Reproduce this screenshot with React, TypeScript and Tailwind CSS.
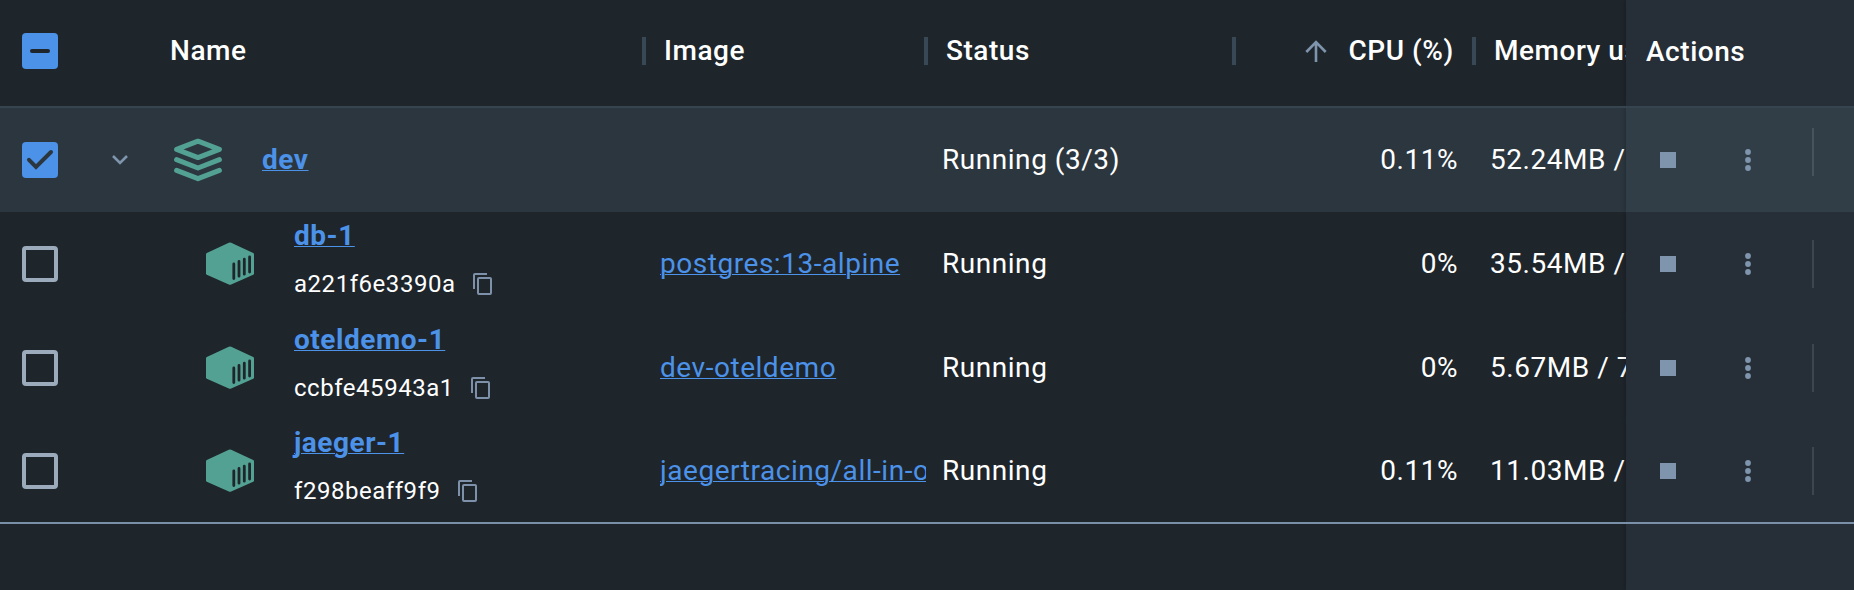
import React from 'react';

type Container = {
  name: string;
  id: string;
  image: string;
  cpu: string;
  memory: string;
  height: string;
};

const containers: Container[] = [
  { name: 'db-1', id: 'a221f6e3390a', image: 'postgres:13-alpine', cpu: '0%', memory: '35.54MB / 7.66GB', height: 'h-[104px]' },
  { name: 'oteldemo-1', id: 'ccbfe45943a1', image: 'dev-oteldemo', cpu: '0%', memory: '5.67MB / 7.66GB', height: 'h-[104px]' },
  { name: 'jaeger-1', id: 'f298beaff9f9', image: 'jaegertracing/all-in-one', cpu: '0.11%', memory: '11.03MB / 7.66GB', height: 'h-[102px]' },
];

const columns =
  'grid flex-none w-[1626px] grid-cols-[80px_80px_500px_266px_308px_240px_152px] items-center overflow-hidden whitespace-nowrap';

const sideShadow = 'shadow-[-1px_0_5px_rgba(0,0,0,0.2)] [clip-path:inset(0_0_0_-10px)]';

const link = 'text-[#4c92e9] underline decoration-1 underline-offset-[1px]';

function Divider() {
  return <span className="h-7 w-1 flex-none bg-[#394855]" />;
}

function CheckBox({ state }: { state: 'on' | 'mixed' | 'off' }) {
  if (state === 'off') {
    return <span className="ml-[22px] size-9 rounded-[4px] border-4 border-[#9cabbc]" />;
  }
  return (
    <svg className="ml-[22px] size-9" viewBox="0 0 36 36" fill="none">
      <rect width="36" height="36" rx="4" fill="#4c92e9" />
      {state === 'mixed' ? (
        <path d="M10 18H26" stroke="#1e252b" strokeWidth="4" strokeLinecap="round" />
      ) : (
        <path d="M7 17.8L14 25L29 10" stroke="#2b363f" strokeWidth="4" strokeLinecap="round" />
      )}
    </svg>
  );
}

function StackIcon() {
  return (
    <svg className="h-[44px] w-12 flex-none" viewBox="0 0 48 44" fill="none" stroke="#53a192" strokeWidth="5" strokeLinejoin="round" strokeLinecap="round">
      <path d="M2.6 11.4L24 3.2L45.4 11.4L24 19.6Z" />
      <path d="M2.6 21.7L24 30L45.4 21.7" />
      <path d="M2.6 32.4L24 40.7L45.4 32.4" />
    </svg>
  );
}

function ContainerIcon() {
  return (
    <svg className="h-[44px] w-12 flex-none" viewBox="0 0 48 44" fill="none">
      <path d="M22.8 0.8Q24 0.3 25.2 0.8L47.2 10.9Q48 11.3 48 12.2V31.4Q48 32.4 47.2 32.8L25.2 42.6Q24 43.1 22.8 42.6L0.8 32.8Q0 32.4 0 31.4V12.2Q0 11.3 0.8 10.9Z" fill="#53a192" />
      <path d="M27.8 22V36.6M33 19.4V34.2M38.3 17.2V32.2M43.6 15V30" stroke="#1e252b" strokeWidth="2.8" strokeLinecap="round" />
    </svg>
  );
}

function CopyIcon() {
  return (
    <svg className="h-[22px] w-[19px] flex-none" viewBox="0 0 19 22" fill="none" stroke="#7d92aa" strokeWidth="2">
      <path d="M1 16V2Q1 1 2 1H14" />
      <rect x="5" y="5" width="13" height="16" rx="1" />
    </svg>
  );
}

function Actions({ active = false }: { active?: boolean }) {
  return (
    <div className={`flex h-full flex-1 items-center ${sideShadow} ${active ? 'bg-[#323e47]' : 'bg-[#262e37]'}`}>
      <span className="ml-[34px] size-4 bg-[#7f94ad]" />
      <svg className="ml-[69px] h-[22px] w-1.5" viewBox="0 0 6 22" fill="#7f94ad">
        <circle cx="3" cy="3" r="2.9" />
        <circle cx="3" cy="11" r="2.9" />
        <circle cx="3" cy="19" r="2.9" />
      </svg>
      <span className={`ml-[61px] h-12 w-0.5 ${active ? 'mb-4 bg-[#46525c]' : 'bg-[#3d464f]'}`} />
    </div>
  );
}

export default function App() {
  return (
    <div className="flex h-[590px] w-full flex-col overflow-hidden bg-[#1e252b] font-['Roboto',sans-serif] text-[28px] leading-8 tracking-[0.54px] text-white">
      <div className="flex h-[108px] items-stretch border-b-2 border-[#36444f] font-medium">
        <div className={`${columns} pb-1`}>
          <CheckBox state="mixed" />
          <span />
          <span className="pl-[10px]">Name</span>
          <div className="-ml-[18px] flex items-center gap-[18px]">
            <Divider />
            Image
          </div>
          <div className="-ml-0.5 flex items-center gap-[18px]">
            <Divider />
            Status
          </div>
          <div className="-ml-0.5 flex items-center">
            <Divider />
            <svg className="ml-[69px] size-[22px]" viewBox="0 0 22 22" fill="none" stroke="#7f94ad" strokeWidth="2.6">
              <path d="M11 22V2M1.3 12L11 2L20.7 12" />
            </svg>
            <span className="ml-[21.5px]">CPU (%)</span>
          </div>
          <div className="-ml-0.5 flex items-center gap-[18px]">
            <Divider />
            Memory usage
          </div>
        </div>
        <div className={`flex flex-1 items-center bg-[#262e37] pb-0.5 pl-5 ${sideShadow}`}>Actions</div>
      </div>

      <div className="flex h-[104px] items-stretch bg-[#2b363f]">
        <div className={columns}>
          <CheckBox state="on" />
          <svg className="ml-8 h-3 w-4" viewBox="0 0 16 12" fill="none" stroke="#7f94ad" strokeWidth="2.6">
            <path d="M1 2L8 9L15 2" />
          </svg>
          <div className="flex items-center gap-10 pl-[14px]">
            <StackIcon />
            <a className={`font-bold ${link}`}>dev</a>
          </div>
          <span />
          <span className="pl-4">Running (3/3)</span>
          <span className="pr-4 text-right">0.11%</span>
          <span className="pl-4">52.24MB / 7.66GB</span>
        </div>
        <Actions active />
      </div>

      {containers.map((c) => (
        <div key={c.name} className={`flex items-stretch ${c.height}`}>
          <div className={columns}>
            <CheckBox state="off" />
            <span />
            <div className="flex items-center gap-10 pl-[46px]">
              <ContainerIcon />
              <div className="flex flex-col items-start gap-4 pb-2">
                <a className={`font-bold ${link}`}>{c.name}</a>
                <div className="flex items-center gap-[17px] text-2xl leading-8">
                  {c.id}
                  <CopyIcon />
                </div>
              </div>
            </div>
            <div className="overflow-hidden">
              <a className={link}>{c.image}</a>
            </div>
            <span className="pl-4">Running</span>
            <span className="pr-4 text-right">{c.cpu}</span>
            <span className="pl-4">{c.memory}</span>
          </div>
          <Actions />
        </div>
      ))}

      <div className="flex flex-1 border-t-2 border-[#7a90a8]">
        <div className="w-[1626px] flex-none" />
        <div className={`flex-1 bg-[#262e37] ${sideShadow}`} />
      </div>
    </div>
  );
}
